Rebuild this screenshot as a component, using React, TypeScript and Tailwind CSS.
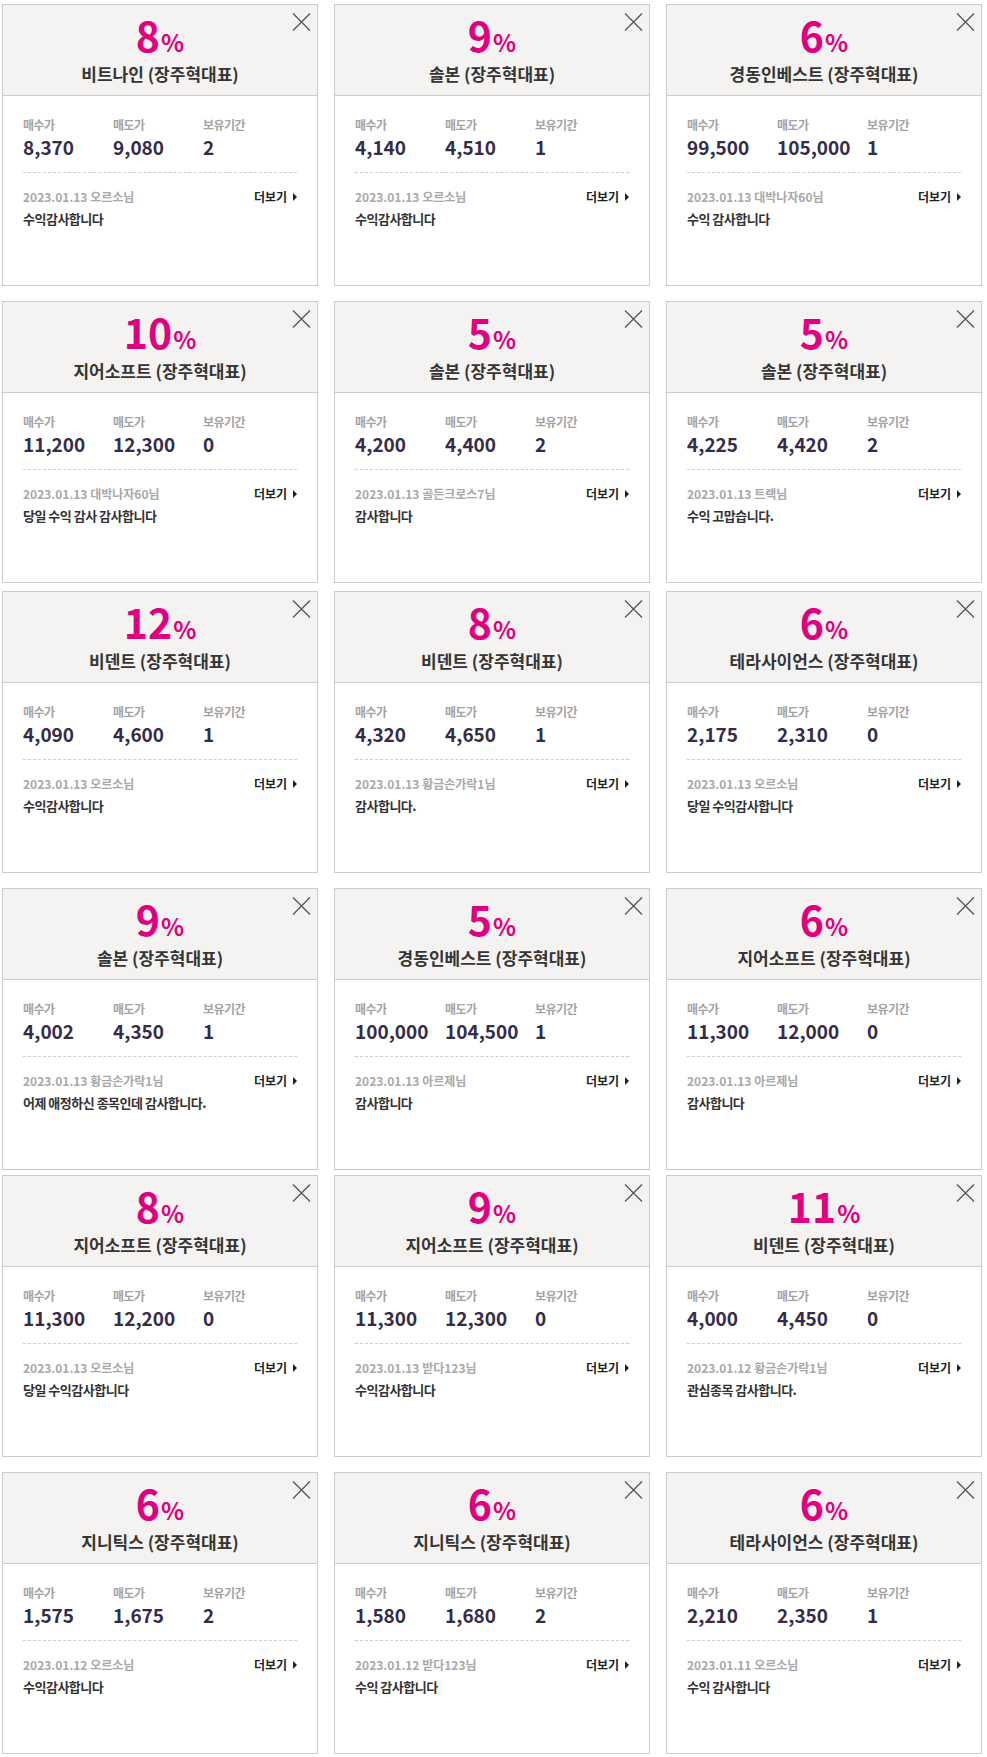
import React from "react";

type Item = {
  pct: string;
  name: string;
  buy: string;
  sell: string;
  hold: string;
  meta: string;
  text: string;
};

const items: Item[] = [
  { pct: "8", name: "비트나인", buy: "8,370", sell: "9,080", hold: "2", meta: "2023.01.13 오르소님", text: "수익감사합니다" },
  { pct: "9", name: "솔본", buy: "4,140", sell: "4,510", hold: "1", meta: "2023.01.13 오르소님", text: "수익감사합니다" },
  { pct: "6", name: "경동인베스트", buy: "99,500", sell: "105,000", hold: "1", meta: "2023.01.13 대박나자60님", text: "수익 감사합니다" },
  { pct: "10", name: "지어소프트", buy: "11,200", sell: "12,300", hold: "0", meta: "2023.01.13 대박나자60님", text: "당일 수익 감사 감사합니다" },
  { pct: "5", name: "솔본", buy: "4,200", sell: "4,400", hold: "2", meta: "2023.01.13 골든크로스7님", text: "감사합니다" },
  { pct: "5", name: "솔본", buy: "4,225", sell: "4,420", hold: "2", meta: "2023.01.13 트랙님", text: "수익 고맙습니다." },
  { pct: "12", name: "비덴트", buy: "4,090", sell: "4,600", hold: "1", meta: "2023.01.13 오르소님", text: "수익감사합니다" },
  { pct: "8", name: "비덴트", buy: "4,320", sell: "4,650", hold: "1", meta: "2023.01.13 황금손가락1님", text: "감사합니다." },
  { pct: "6", name: "테라사이언스", buy: "2,175", sell: "2,310", hold: "0", meta: "2023.01.13 오르소님", text: "당일 수익감사합니다" },
  { pct: "9", name: "솔본", buy: "4,002", sell: "4,350", hold: "1", meta: "2023.01.13 황금손가락1님", text: "어제 애정하신 종목인데 감사합니다." },
  { pct: "5", name: "경동인베스트", buy: "100,000", sell: "104,500", hold: "1", meta: "2023.01.13 아르제님", text: "감사합니다" },
  { pct: "6", name: "지어소프트", buy: "11,300", sell: "12,000", hold: "0", meta: "2023.01.13 아르제님", text: "감사합니다" },
  { pct: "8", name: "지어소프트", buy: "11,300", sell: "12,200", hold: "0", meta: "2023.01.13 오르소님", text: "당일 수익감사합니다" },
  { pct: "9", name: "지어소프트", buy: "11,300", sell: "12,300", hold: "0", meta: "2023.01.13 받다123님", text: "수익감사합니다" },
  { pct: "11", name: "비덴트", buy: "4,000", sell: "4,450", hold: "0", meta: "2023.01.12 황금손가락1님", text: "관심종목 감사합니다." },
  { pct: "6", name: "지니틱스", buy: "1,575", sell: "1,675", hold: "2", meta: "2023.01.12 오르소님", text: "수익감사합니다" },
  { pct: "6", name: "지니틱스", buy: "1,580", sell: "1,680", hold: "2", meta: "2023.01.12 받다123님", text: "수익 감사합니다" },
  { pct: "6", name: "테라사이언스", buy: "2,210", sell: "2,350", hold: "1", meta: "2023.01.11 오르소님", text: "수익 감사합니다" },
];

const rowMargins = ["mt-[4px]", "mt-[15px]", "mt-[8px]", "mt-[15px]", "mt-[5px]", "mt-[15px]"];

function Stat({ label, value }: { label: string; value: string }) {
  return (
    <div className="w-[90px] shrink-0">
      <div className="text-[12px] leading-[16px] font-bold tracking-[-0.5px] text-[#a3a3a3]">{label}</div>
      <div className="mt-[2px] text-[19px] leading-[24px] font-bold text-[#352c4a]">{value}</div>
    </div>
  );
}

function Card({ it }: { it: Item }) {
  return (
    <div className="relative w-[316px] h-[282px] border border-[#cccccc] bg-white shrink-0">
      <div className="h-[91px] bg-[#f4f3f1] border-b border-[#cccccc] flex flex-col items-center">
        <div className="mt-[9px] h-[41px] flex items-baseline text-[#e0007f] font-bold">
          <span className="text-[41px] leading-[41px]">{it.pct}</span>
          <span className="text-[24px] leading-[24px] ml-[1px]">%</span>
        </div>
        <div className="mt-[7px] text-[17px] leading-[24px] font-bold text-[#353535]">
          {it.name} (장주혁대표)
        </div>
      </div>
      <button className="absolute right-[6px] top-[7px] w-[20px] h-[19px] flex items-center justify-center">
        <svg width="19" height="18" viewBox="0 0 19 18" fill="none">
          <path d="M1 0.5 L18 17.5 M18 0.5 L1 17.5" stroke="#555555" strokeWidth="1.3" />
        </svg>
      </button>
      <div className="px-[20px] pt-[21px]">
        <div className="flex">
          <Stat label="매수가" value={it.buy} />
          <Stat label="매도가" value={it.sell} />
          <Stat label="보유기간" value={it.hold} />
        </div>
        <div className="mt-[13px] border-t border-dashed border-[#cfcfcf]" />
        <div className="mt-[15px] flex items-center justify-between">
          <div className="text-[12px] leading-[18px] font-bold text-[#a8a8a8]">{it.meta}</div>
          <div className="flex items-center text-[12px] leading-[18px] font-bold text-[#222222]">
            더보기
            <span className="ml-[6px] w-0 h-0 border-y-[4px] border-y-transparent border-l-[4px] border-l-[#222222]" />
          </div>
        </div>
        <div className="mt-[3px] text-[13px] leading-[20px] font-bold tracking-[-0.5px] text-[#333333]">{it.text}</div>
      </div>
    </div>
  );
}

export default function App() {
  const rows: Item[][] = [];
  for (let i = 0; i < items.length; i += 3) rows.push(items.slice(i, i + 3));
  return (
    <div
      className="w-[987px] min-h-[1757px] bg-white pl-[2px] pb-[3px]"
      style={{ fontFamily: '"Noto Sans CJK KR", "Noto Sans", sans-serif' }}
    >
      {rows.map((r, ri) => (
        <div key={ri} className={`flex gap-[16px] ${rowMargins[ri]}`}>
          {r.map((it, ci) => (
            <Card key={ci} it={it} />
          ))}
        </div>
      ))}
    </div>
  );
}
